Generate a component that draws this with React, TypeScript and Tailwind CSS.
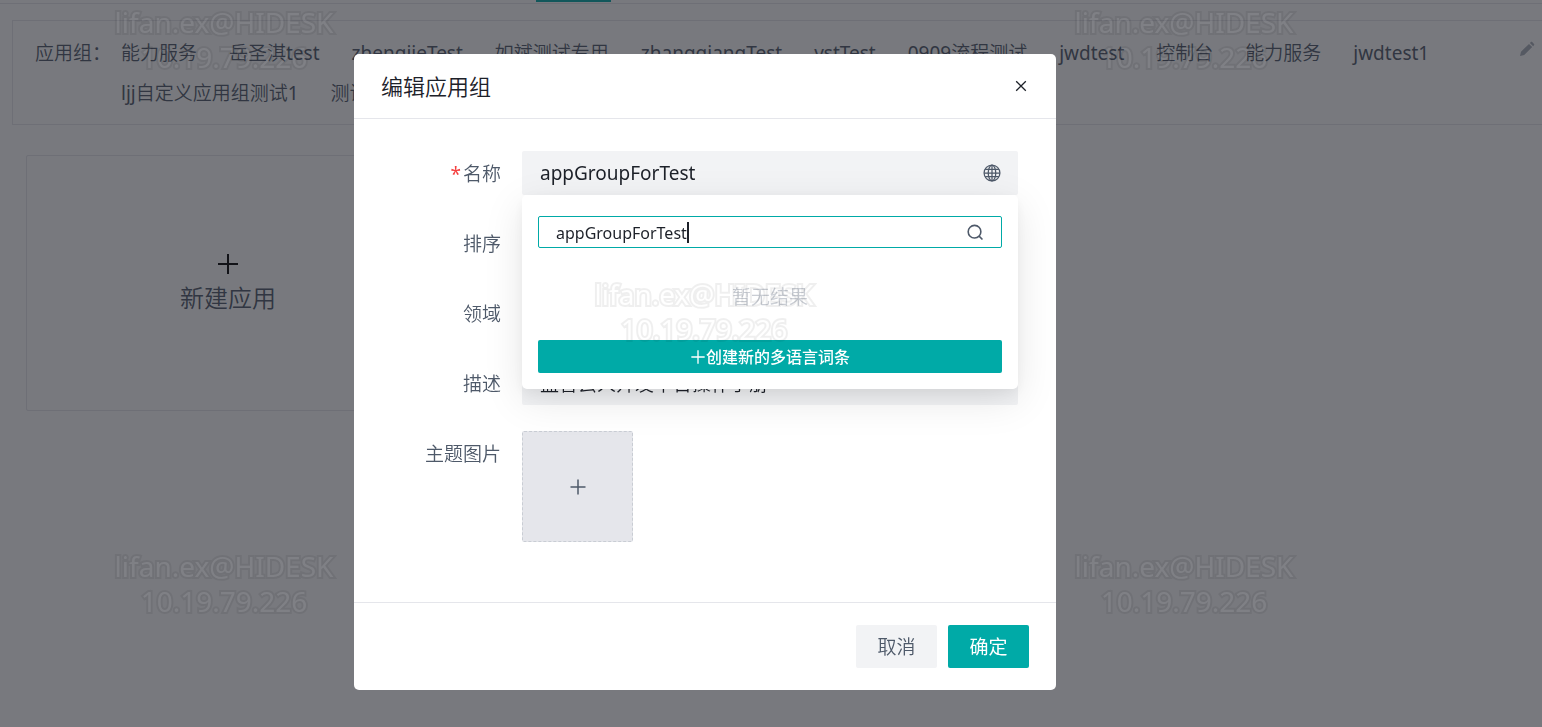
import { useState, type ReactNode } from "react";

const groups = [
  "能力服务",
  "岳圣淇test",
  "zhengjieTest",
  "如斌测试专用",
  "zhangqiangTest",
  "vstTest",
  "0909流程测试",
  "jwdtest",
  "控制台",
  "能力服务",
  "jwdtest1",
  "ljj自定义应用组测试1",
  "测试应用组",
];

function PlusIcon({ className, width = 1.5 }: { className: string; width?: number }) {
  return (
    <svg viewBox="0 0 24 24" className={className} fill="none" stroke="currentColor" strokeWidth={width} aria-hidden="true">
      <path d="M12 2v20M2 12h20" />
    </svg>
  );
}

function CloseIcon() {
  return (
    <svg viewBox="0 0 12 12" className="size-3" fill="none" stroke="currentColor" strokeWidth="1.3" aria-hidden="true">
      <path d="M1.2 1.2l9.6 9.6M10.8 1.2l-9.6 9.6" />
    </svg>
  );
}

function GlobeIcon() {
  return (
    <svg viewBox="0 0 48 48" className="size-5" fill="none" stroke="currentColor" strokeWidth="3" aria-hidden="true">
      <circle cx="24" cy="24" r="19" />
      <ellipse cx="24" cy="24" rx="9" ry="19" />
      <path d="M24 5v38M7.5 15.5h33M5 24h38M7.5 32.5h33" />
    </svg>
  );
}

function SearchIcon() {
  return (
    <svg viewBox="0 0 48 48" className="size-[19px] shrink-0" fill="none" stroke="currentColor" strokeWidth="4" aria-hidden="true">
      <path d="M33.07 33.07A16 16 0 1 1 33.07 10.9a16 16 0 0 1 0 22.17zm0 0l8.5 8.5" />
    </svg>
  );
}

function PencilIcon() {
  return (
    <svg viewBox="0 0 16 16" className="size-4" fill="currentColor" aria-hidden="true">
      <path d="M1 15l1-4.2L10 2.9l3.200 3.200-8 7.900zM10.900 2l1-.9c.4-.4.9-.4 1.300 0l1.800 1.800c.4.4.4.9 0 1.300l-.9 1z" />
    </svg>
  );
}

function Row({ label, htmlFor, required, children }: { label: string; htmlFor: string; required?: boolean; children: ReactNode }) {
  return (
    <div className="flex items-start gap-[21px]">
      <label htmlFor={htmlFor} className="flex h-[46px] w-[147px] shrink-0 items-center justify-end gap-0.5 text-[#4e5969]">
        {required && <span className="text-[#f53f3f]">*</span>}
        {label}
      </label>
      <div className="relative min-w-0 flex-1">{children}</div>
    </div>
  );
}

const fieldClass = "block h-11 w-full rounded-xs bg-[#f2f3f5] px-[18px] text-[#1d2129] outline-none";

function Watermark({ place }: { place: string }) {
  return (
    <div className={`absolute flex w-56 flex-col items-center text-[28px] leading-[35px] whitespace-nowrap text-white opacity-6 [-webkit-text-stroke:4px_black] [paint-order:stroke_fill] ${place}`}>
      <span>lifan.ex@HIDESK</span>
      <span>10.19.79.226</span>
    </div>
  );
}

export default function App() {
  const [name, setName] = useState("appGroupForTest");
  const [query, setQuery] = useState("appGroupForTest");
  const [about, setAbout] = useState("蓝智云人开发平台操作手册");

  return (
    <div className="relative h-screen overflow-hidden bg-white font-['Noto_Sans','Noto_Sans_CJK_SC_DemiLight','Noto_Sans_CJK_SC',sans-serif] text-[19px] text-[#4e5969]">
      <nav className="flex h-1 items-start border-b border-[#e5e6eb] pl-[536px]" aria-label="导航">
        <span className="h-0.5 w-[75px] bg-[#00aaa7]" />
      </nav>

      <main>
        <section className="mt-4 ml-3 flex items-start border border-r-0 border-[#e5e6eb] pt-3 pr-[7px] pb-[11px] pl-[22px]">
          <h2 className="w-[86px] shrink-0 leading-10">应用组：</h2>
          <ul className="flex flex-1 flex-wrap gap-x-8">
            {groups.map((group, i) => (
              <li key={i} className="leading-10">
                {group}
              </li>
            ))}
          </ul>
          <button type="button" aria-label="编辑" className="mt-2 text-[#a9aeb8]">
            <PencilIcon />
          </button>
        </section>

        <button type="button" className="mt-[30px] ml-[26px] flex h-64 w-[404px] flex-col items-center justify-center gap-1.5 rounded-xs border border-[#e5e6eb] text-2xl">
          <PlusIcon className="size-6 text-black" width={2} />
          新建应用
        </button>
      </main>

      <div className="fixed inset-0 flex items-center justify-center bg-[#1e2028]/60 pt-[17px] pr-33">
        <div role="dialog" aria-modal="true" aria-labelledby="dialog-title" className="w-[702px] rounded-[5px] bg-white">
          <header className="flex h-[65px] items-center justify-between border-b border-[#e5e6eb] px-[27px] text-[#1d2129]">
            <h1 id="dialog-title" className="text-[22px]">编辑应用组</h1>
            <button type="button" aria-label="关闭" className="grid size-4 place-items-center">
              <CloseIcon />
            </button>
          </header>

          <form className="flex h-[483px] flex-col gap-6 pt-8 pr-[38px]" onSubmit={(e) => e.preventDefault()}>
            <Row label="名称" htmlFor="name" required>
              <input id="name" value={name} onChange={(e) => setName(e.target.value)} className={fieldClass} />
              <button type="button" aria-label="多语言" className="absolute top-3 right-4 text-[#4e5969]">
                <GlobeIcon />
              </button>
              <div className="absolute inset-x-0 top-full z-10 flex flex-col rounded-[5px] bg-white px-4 pt-[21px] pb-4 text-base shadow-[0_5px_13px_rgba(0,0,0,0.05),0_11px_40px_rgba(0,0,0,0.1)]">
                <label className="flex h-8 items-center rounded-xs border border-[#00aaa7] pr-4 pl-[17px] text-[#4e5969]">
                  <input aria-label="搜索词条" value={query} onChange={(e) => setQuery(e.target.value)} className="field-sizing-content pt-0.5 text-[#1d2129] outline-none" />
                  <span className="h-[21px] w-0.5 bg-[#1d2129]" />
                  <span className="flex-1" />
                  <SearchIcon />
                </label>
                <p className="flex h-[92px] items-center justify-center pt-1.5 text-[19px] text-[#c9cdd4]">暂无结果</p>
                <button type="button" className="flex h-[33px] items-center justify-center rounded-xs bg-[#00aaa7] font-medium text-white">
                  <PlusIcon className="size-4" width={2} />
                  <span className="font-['Noto_Sans','Noto_Sans_CJK_SC',sans-serif]">创建新的多语言词条</span>
                </button>
              </div>
            </Row>
            <Row label="排序" htmlFor="order">
              <input id="order" className={fieldClass} />
            </Row>
            <Row label="领域" htmlFor="domain">
              <input id="domain" className={fieldClass} />
            </Row>
            <Row label="描述" htmlFor="about">
              <input id="about" value={about} onChange={(e) => setAbout(e.target.value)} className={fieldClass} />
            </Row>
            <Row label="主题图片" htmlFor="picture">
              <button id="picture" type="button" className="grid size-[111px] place-items-center rounded-xs border border-dashed border-[#c9cdd4] bg-[#e5e6eb] text-[#4e5969]">
                <PlusIcon className="size-[18px]" width={2} />
              </button>
            </Row>
          </form>

          <footer className="flex h-22 items-center justify-end gap-[11px] border-t border-[#e5e6eb] px-[27px]">
            <button type="button" className="h-[43px] w-[81px] rounded-xs bg-[#f2f3f5] pt-0.5 text-[#4e5969]">
              取消
            </button>
            <button type="button" className="h-[43px] w-[81px] rounded-xs bg-[#00aaa7] pt-0.5 font-['Noto_Sans','Noto_Sans_CJK_SC',sans-serif] text-white">
              确定
            </button>
          </footer>
        </div>
      </div>

      <div className="pointer-events-none fixed inset-0 z-20 overflow-hidden" aria-hidden="true">
        <Watermark place="left-[112px] top-[5px]" />
        <Watermark place="left-[1072px] top-[5px]" />
        <Watermark place="left-[592px] top-[277px]" />
        <Watermark place="left-[112px] top-[549px]" />
        <Watermark place="left-[1072px] top-[549px]" />
      </div>
    </div>
  );
}
